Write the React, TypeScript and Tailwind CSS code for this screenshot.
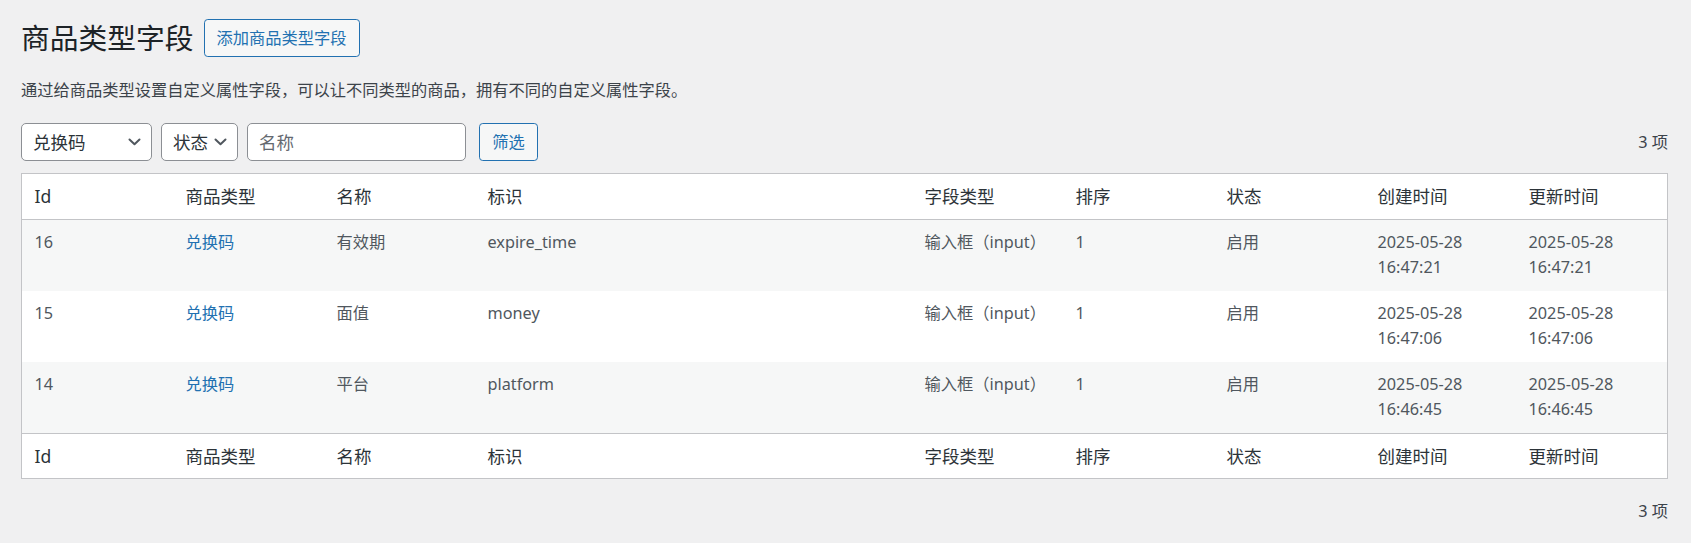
import type { ReactNode } from 'react';

const font = 'font-["Segoe_UI","Noto_Sans","Noto_Sans_CJK_SC",sans-serif]';

const rows = [
  { id: 16, type: '兑换码', name: '有效期', key: 'expire_time', field: '输入框（input）', sort: 1, status: '启用', created: ['2025-05-28', '16:47:21'], updated: ['2025-05-28', '16:47:21'] },
  { id: 15, type: '兑换码', name: '面值', key: 'money', field: '输入框（input）', sort: 1, status: '启用', created: ['2025-05-28', '16:47:06'], updated: ['2025-05-28', '16:47:06'] },
  { id: 14, type: '兑换码', name: '平台', key: 'platform', field: '输入框（input）', sort: 1, status: '启用', created: ['2025-05-28', '16:46:45'], updated: ['2025-05-28', '16:46:45'] },
];

const columns = ['Id', '商品类型', '名称', '标识', '字段类型', '排序', '状态', '创建时间', '更新时间'];

function Chevron() {
  return (
    <svg width="13" height="8" viewBox="0 0 13 8" fill="none" className="shrink-0">
      <path d="M1.5 1.5 6.5 6.2 11.5 1.5" stroke="#50575e" strokeWidth="2" strokeLinecap="round" strokeLinejoin="round" />
    </svg>
  );
}

function SelectBox({ label, width }: { label: string; width: string }) {
  return (
    <div className={`flex h-[38px] items-center justify-between rounded-[5px] border border-[#8c8f94] bg-white pl-[11px] pr-[10px] text-[17.5px] text-[#2c3338] ${width}`}>
      <span>{label}</span>
      <Chevron />
    </div>
  );
}

function Cell({ children, className = '' }: { children: ReactNode; className?: string }) {
  return <td className={`px-[12.5px] py-[10.5px] align-top leading-[25px] ${className}`}>{children}</td>;
}

function HeadRow({ foot }: { foot?: boolean }) {
  return (
    <tr>
      {columns.map((c) => (
        <th
          key={c}
          className={`px-[12.5px] py-[10px] text-left text-[17.5px] font-normal leading-[24.5px] text-[#2c3338] ${foot ? 'border-t border-[#c3c4c7]' : 'border-b border-[#c3c4c7]'}`}
        >
          {c}
        </th>
      ))}
    </tr>
  );
}

export default function App() {
  return (
    <div className={`min-h-screen bg-[#f0f0f1] pl-[21px] pr-[23px] ${font}`}>
      <div className="flex items-center pt-[19px]">
        <h1 className="text-[28.75px] font-normal leading-[37.5px] text-[#1d2327]">商品类型字段</h1>
        <button className="ml-[10px] h-[37.5px] rounded-[3.75px] border border-[#2271b1] bg-[#f6f7f7] px-[12px] text-[16.25px] text-[#2271b1]">
          添加商品类型字段
        </button>
      </div>

      <p className="mt-[21px] text-[16.25px] leading-[24.5px] text-[#3c434a]">
        通过给商品类型设置自定义属性字段，可以让不同类型的商品，拥有不同的自定义属性字段。
      </p>

      <div className="mt-[21px] flex h-[38px] items-center justify-between">
        <div className="flex items-center">
          <SelectBox label="兑换码" width="w-[131px]" />
          <div className="ml-[9px]">
            <SelectBox label="状态" width="w-[77px]" />
          </div>
          <input
            placeholder="名称"
            className="ml-[9px] h-[38px] w-[219px] rounded-[5px] border border-[#8c8f94] bg-white px-[11px] text-[17.5px] text-[#2c3338] outline-none placeholder:text-[#646970]"
          />
          <button className="ml-[13px] h-[38px] w-[59px] rounded-[3.75px] border border-[#2271b1] bg-[#f6f7f7] text-[16.25px] text-[#2271b1]">
            筛选
          </button>
        </div>
        <span className="text-[16.25px] text-[#3c434a]">3 项</span>
      </div>

      <table className="mt-[12px] w-full table-fixed border-separate border-spacing-0 border border-[#c3c4c7] bg-white">
        <colgroup>
          <col className="w-[151px]" />
          <col className="w-[151px]" />
          <col className="w-[151px]" />
          <col />
          <col className="w-[151px]" />
          <col className="w-[151px]" />
          <col className="w-[151px]" />
          <col className="w-[151px]" />
          <col className="w-[151px]" />
        </colgroup>
        <thead>
          <HeadRow />
        </thead>
        <tbody className="text-[16.25px] text-[#50575e]">
          {rows.map((r, i) => (
            <tr key={r.id} className={i % 2 === 0 ? 'bg-[#f6f7f7]' : 'bg-white'}>
              <Cell>{r.id}</Cell>
              <Cell className="text-[#2271b1]">{r.type}</Cell>
              <Cell>{r.name}</Cell>
              <Cell>{r.key}</Cell>
              <Cell>{r.field}</Cell>
              <Cell>{r.sort}</Cell>
              <Cell>{r.status}</Cell>
              <Cell>
                {r.created[0]}
                <br />
                {r.created[1]}
              </Cell>
              <Cell>
                {r.updated[0]}
                <br />
                {r.updated[1]}
              </Cell>
            </tr>
          ))}
        </tbody>
        <tfoot>
          <HeadRow foot />
        </tfoot>
      </table>

      <div className="mt-[20px] flex justify-end">
        <span className="text-[16.25px] leading-[24.5px] text-[#3c434a]">3 项</span>
      </div>
    </div>
  );
}
